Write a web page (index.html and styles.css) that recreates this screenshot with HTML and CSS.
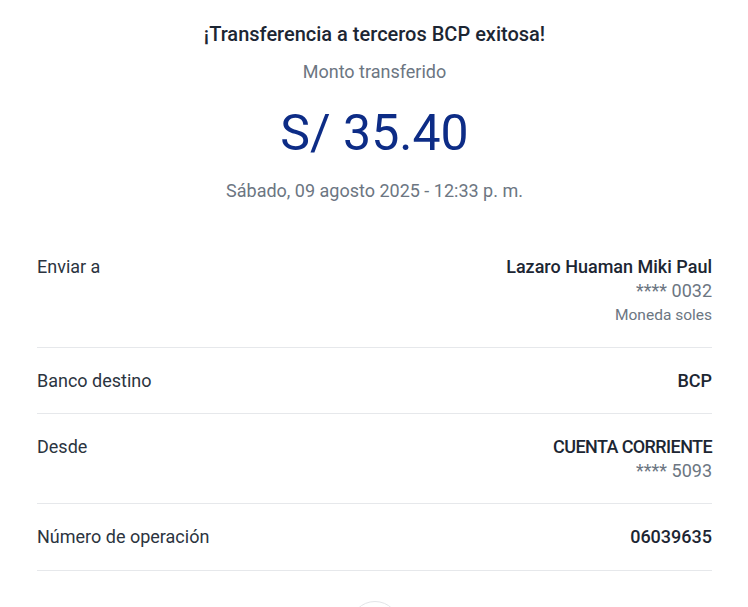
FILE: index.html
```html
<!DOCTYPE html>
<html lang="es">
<head>
<meta charset="utf-8">
<title>Transferencia exitosa</title>
<link rel="stylesheet" href="styles.css">
</head>
<body>
<main class="page">
  <header class="summary">
    <h1 class="title">¡Transferencia a terceros BCP exitosa!</h1>
    <p class="label-top">Monto transferido</p>
    <p class="amount">S/ 35.40</p>
    <p class="date">Sábado, 09 agosto 2025 - 12:33 p. m.</p>
  </header>
  <section class="details">
    <div class="row">
      <span class="key">Enviar a</span>
      <div class="val">
        <span class="strong">Lazaro Huaman Miki Paul</span>
        <span class="sub">**** 0032</span>
        <span class="small">Moneda soles</span>
      </div>
    </div>
    <div class="row">
      <span class="key">Banco destino</span>
      <div class="val"><span class="strong">BCP</span></div>
    </div>
    <div class="row">
      <span class="key">Desde</span>
      <div class="val">
        <span class="strong caps">CUENTA CORRIENTE</span>
        <span class="sub">**** 5093</span>
      </div>
    </div>
    <div class="row">
      <span class="key">Número de operación</span>
      <div class="val"><span class="strong">06039635</span></div>
    </div>
  </section>
  <div class="actions">
    <div class="circle"></div>
  </div>
</main>
</body>
</html>
```
FILE: styles.css
```css
* { box-sizing: border-box; }
html, body { margin: 0; padding: 0; background: #ffffff; }
body {
  font-family: Roboto, "Liberation Sans", Arial, sans-serif;
  color: #2b3440;
  overflow: hidden;
  height: 607px;
}
.page {
  padding: 0 36px 0 37px;
}
.summary {
  display: flex;
  flex-direction: column;
  align-items: center;
  padding-top: 19px;
}
.title {
  margin: 0;
  font-size: 20px;
  line-height: 30px;
  font-weight: 500;
  color: #1c2633;
}
.label-top {
  margin: 11px 0 0;
  font-size: 18px;
  line-height: 24px;
  color: #6c7682;
}
.amount {
  margin: 19px 0 0;
  font-size: 50px;
  line-height: 60px;
  font-weight: 400;
  color: #0d2c86;
}
.date {
  margin: 16px 0 0;
  font-size: 18px;
  line-height: 24px;
  color: #6c7682;
}
.details {
  margin-top: 31px;
}
.row {
  display: flex;
  justify-content: space-between;
  align-items: flex-start;
  padding: 21px 0 20px;
  border-bottom: 1px solid #e6e8eb;
}
.row:last-child {
  padding-bottom: 21px;
}
.key {
  font-size: 18px;
  line-height: 24px;
  color: #2b3440;
}
.val {
  display: flex;
  flex-direction: column;
  align-items: flex-end;
  text-align: right;
}
.strong {
  font-size: 18px;
  line-height: 24px;
  font-weight: 500;
  color: #1c2633;
}
.caps {
  letter-spacing: -0.6px;
}
.sub {
  font-size: 18px;
  line-height: 24px;
  color: #6c7682;
}
.small {
  font-size: 15.5px;
  line-height: 24px;
  color: #6c7682;
}
.actions {
  display: flex;
  justify-content: center;
  padding-top: 30px;
}
.circle {
  width: 50px;
  height: 50px;
  border-radius: 50%;
  border: 1px solid #e3e5e8;
}
```
